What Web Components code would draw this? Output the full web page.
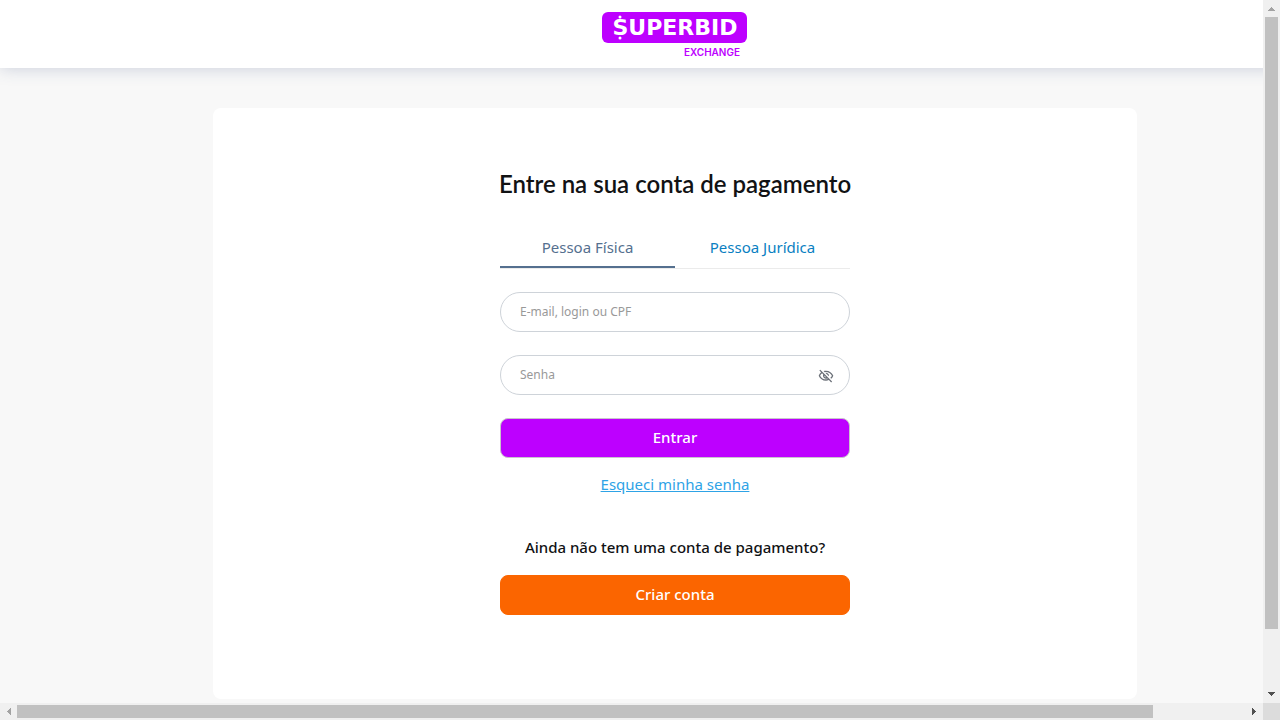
<!DOCTYPE html>
<html lang="pt-BR">
<head>
<meta charset="utf-8">
<meta name="viewport" content="width=device-width, initial-scale=1">
<title>Superbid Exchange – Entrar</title>
<style>
  html, body { margin: 0; height: 100%; }
  body {
    --purple: #bd00ff;
    --orange: #fb6500;
    --ink: #111214;
    font-family: "Noto Sans", "Open Sans", sans-serif;
    color: var(--ink);
    background: #f8f8f8;
    overflow: hidden;
  }
</style>
</head>
<body>
<scroll-frame>
  <site-header></site-header>
  <login-card>
    <tab-switch></tab-switch>
    <form-field kind="text" name="login" hint="E-mail, login ou CPF"></form-field>
    <form-field kind="password" name="senha" hint="Senha"></form-field>
    <action-button tone="primary">Entrar</action-button>
    <text-link>Esqueci minha senha</text-link>
    <sign-up-prompt slot="footer">
      Ainda não tem uma conta de pagamento?
      <action-button slot="action" tone="secondary">Criar conta</action-button>
    </sign-up-prompt>
  </login-card>
</scroll-frame>

<script>
function define(name, html, setup) {
  const template = document.createElement('template');
  template.innerHTML = html;
  customElements.define(name, class extends HTMLElement {
    connectedCallback() {
      if (this.shadowRoot) return;
      const root = this.attachShadow({ mode: 'open' });
      root.append(template.content.cloneNode(true));
      if (setup) setup(this, root);
    }
  });
}

/* Window frame: content pane, two scroll bars and the corner between them */
define('scroll-frame', `
<style>
  :host { display: grid; grid-template: minmax(0, 1fr) 17px / minmax(0, 1fr) 17px; height: 100vh; }
  .pane { overflow: hidden; }
  .page { min-width: 1350px; }
  .corner { background: #dcdcdc; }
</style>
<div class="pane"><div class="page"><slot></slot></div></div>
<scroll-bar axis="y"></scroll-bar>
<scroll-bar axis="x"></scroll-bar>
<div class="corner"></div>`);

define('scroll-bar', `
<style>
  :host { display: grid; background: #f0f0f0; }
  :host([axis="y"]) { grid-template-rows: 17px 612fr 57fr 17px; }
  :host([axis="x"]) { grid-template-columns: 17px 1136fr 93fr 17px; }
  .thumb { background: #c1c1c1; }
  :host([axis="y"]) .thumb { margin: 0 2px; }
  :host([axis="x"]) .thumb { margin: 2px 0; }
  svg { display: block; width: 17px; height: 17px; fill: #505050; }
  svg.start { fill: #a3a3a3; }
  :host([axis="x"]) svg { transform: rotate(-90deg); }
</style>
<svg class="start" viewBox="0 0 17 17" shape-rendering="crispEdges"><path d="M5 11h7L8.500 7z"/></svg>
<div class="thumb"></div>
<div></div>
<svg class="end" viewBox="0 0 17 17" shape-rendering="crispEdges"><path d="M5 6h7L8.500 10z"/></svg>`);

define('site-header', `
<style>
  :host {
    display: flex; justify-content: center; height: 68px; box-sizing: border-box; padding-top: 12px;
    background: #fff; box-shadow: 0 0 16px rgba(60, 80, 130, .25);
  }
</style>
<brand-logo></brand-logo>`);

define('brand-logo', `
<style>
  :host { display: block; }
  svg { display: block; }
  .name { font: 700 22px "DejaVu Sans", sans-serif; fill: #fff; }
  .unit { font: 600 10px Inter, sans-serif; fill: var(--purple); }
</style>
<svg width="146" height="48" viewBox="0 0 146 48" role="img" aria-label="Superbid Exchange">
  <rect width="145" height="31" rx="6" fill="var(--purple)"/>
  <circle cx="18" cy="5" r="1.500" fill="#fff"/>
  <circle cx="18" cy="26" r="1.500" fill="#fff"/>
  <text class="name" x="73" y="23" text-anchor="middle">SUPERBID</text>
  <text class="unit" x="138" y="44" text-anchor="end">EXCHANGE</text>
</svg>`);

define('login-card', `
<style>
  :host {
    display: flex; justify-content: center; max-width: 924px; box-sizing: border-box;
    margin: 40px auto; padding: 60px 24px 84px; border-radius: 8px; background: #fff;
  }
  .column { display: flex; flex-direction: column; width: 350px; }
  h1 { align-self: center; margin: 0 0 28px; font: 600 24px/32px Lato, sans-serif; white-space: nowrap; }
  form { display: grid; gap: 23px; margin: 0; }
</style>
<div class="column">
  <h1>Entre na sua conta de pagamento</h1>
  <form><slot></slot></form>
  <slot name="footer"></slot>
</div>`);

define('tab-switch', `
<style>
  :host { display: block; }
  div { display: grid; grid-template-columns: 1fr 1fr; border-bottom: 1px solid #ebebeb; }
  button {
    height: 40px; padding: 0; border: 0; border-bottom: 2px solid transparent;
    background: none; font: 400 15px/24px "Noto Sans", sans-serif; color: #0a7fc2; cursor: pointer;
  }
  button[aria-selected="true"] { border-color: #55708f; color: #55708f; }
</style>
<div role="tablist">
  <button type="button" role="tab" aria-selected="true">Pessoa Física</button>
  <button type="button" role="tab" aria-selected="false">Pessoa Jurídica</button>
</div>`, (host, root) => {
  const tabs = [...root.querySelectorAll('button')];
  tabs.forEach(tab => tab.addEventListener('click', () =>
    tabs.forEach(t => t.setAttribute('aria-selected', String(t === tab)))));
});

define('form-field', `
<style>
  :host {
    display: flex; align-items: center; height: 40px; box-sizing: border-box;
    padding: 0 15px 0 19px; border: 1px solid #ced3d9; border-radius: 20px; background: #fff;
  }
  input {
    flex: 1; min-width: 0; height: 24px; padding: 0; border: 0; outline: 0; background: none;
    font: 400 12px/24px "Noto Sans", sans-serif; color: var(--ink);
  }
  input::placeholder { color: #999; opacity: 1; }
  button { display: flex; padding: 2px 0 0; border: 0; background: none; color: #6b7078; cursor: pointer; }
  button[hidden] { display: none; }
  svg { width: 16px; height: 16px; fill: currentColor; }
</style>
<input>
<button type="button" aria-label="Mostrar senha" hidden>
  <svg viewBox="0 0 24 24"><path d="M12 6c3.790 0 7.170 2.130 8.820 5.500-.590 1.220-1.420 2.270-2.410 3.120l1.410 1.410c1.390-1.230 2.490-2.770 3.180-4.530C21.270 7.110 17 4 12 4c-1.270 0-2.490.200-3.640.570l1.650 1.650C10.660 6.090 11.320 6 12 6zm-1.070 1.140L13 9.210c.570.250 1.030.710 1.280 1.280l2.070 2.070c.080-.340.140-.700.140-1.070C16.500 9.010 14.480 7 12 7c-.370 0-.720.050-1.070.140zM2.010 3.870l2.680 2.680C3.060 7.830 1.770 9.530 1 11.500 2.730 15.890 7 19 12 19c1.520 0 2.980-.290 4.320-.820l3.420 3.420 1.410-1.410L3.420 2.450 2.010 3.870zm7.500 7.500l2.610 2.610c-.040.010-.080.020-.120.020-1.380 0-2.500-1.120-2.500-2.500 0-.050.010-.080.010-.130zm-3.400-3.400l1.750 1.750c-.230.550-.360 1.150-.360 1.780 0 2.480 2.020 4.500 4.500 4.500.630 0 1.230-.130 1.770-.360l.980.980c-.880.240-1.800.380-2.750.380-3.790 0-7.170-2.130-8.820-5.500.700-1.430 1.720-2.610 2.930-3.530z"/></svg>
</button>`, (host, root) => {
  const input = root.querySelector('input');
  const toggle = root.querySelector('button');
  const kind = host.getAttribute('kind');
  input.type = kind;
  input.name = host.getAttribute('name');
  input.placeholder = host.getAttribute('hint');
  input.setAttribute('aria-label', host.getAttribute('hint'));
  toggle.hidden = kind !== 'password';
  toggle.addEventListener('click', () => {
    input.type = input.type === 'password' ? 'text' : 'password';
  });
});

define('action-button', `
<style>
  :host { display: block; }
  button {
    display: block; width: 100%; height: 40px; padding: 0 0 2px; border: 1px solid var(--orange); border-radius: 8px;
    background: var(--orange); color: #fff; font: 500 15px/24px "Noto Sans", sans-serif; cursor: pointer;
  }
  :host([tone="primary"]) button { border-color: #c9c4cc; background: var(--purple); }
</style>
<button type="button"><slot></slot></button>`);

define('text-link', `
<style>
  :host { display: block; margin-top: -9px; text-align: center; font-size: 15px; line-height: 24px; }
  a { color: #2ea3e6; text-decoration: underline; }
</style>
<a href="#"><slot></slot></a>`);

define('sign-up-prompt', `
<style>
  :host { display: block; margin-top: 39px; text-align: center; }
  p { margin: 0 0 16px; font-size: 15px; font-weight: 500; line-height: 24px; }
</style>
<p><slot></slot></p>
<slot name="action"></slot>`);
</script>
</body>
</html>
